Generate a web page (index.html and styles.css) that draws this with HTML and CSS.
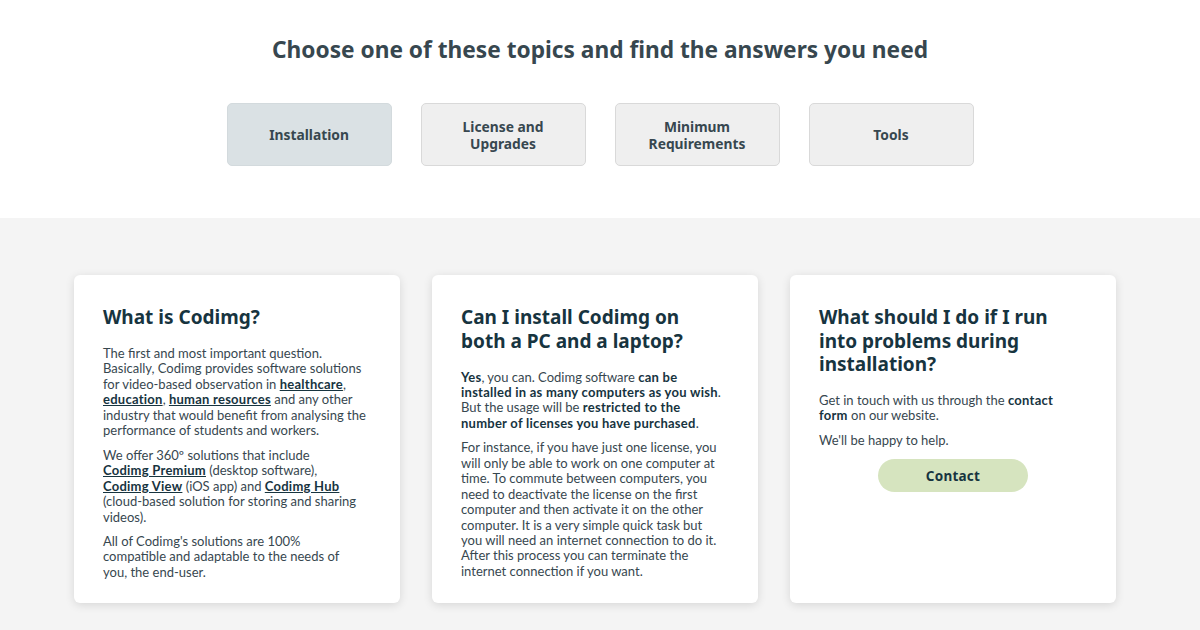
FILE: index.html
```html
<!DOCTYPE html>
<html lang="en">
<head>
    <meta charset="UTF-8">
    <meta name="viewport" content="width=device-width, initial-scale=1.0">
    <title>FAQ - Codimg</title>
    <link rel="stylesheet" href="styles.css">
</head>
<body>

    <section class="topics">
        <h2>Choose one of these topics and find the answers you need</h2>
        <div class="topic-list">
            <a href="#" class="topic active">Installation</a>
            <a href="#" class="topic">License and<br>Upgrades</a>
            <a href="#" class="topic">Minimum<br>Requirements</a>
            <a href="#" class="topic">Tools</a>
        </div>
    </section>

    <section class="answers">
        <div class="card">
            <h3>What is Codimg?</h3>
            <p>The first and most important question. Basically, Codimg provides software solutions for video-based observation in <a href="#">healthcare</a>, <a href="#">education</a>, <a href="#">human resources</a> and any other industry that would benefit from analysing the performance of students and workers.</p>
            <p>We offer 360º solutions that include <a href="#">Codimg&nbsp;Premium</a> (desktop software), <a href="#">Codimg&nbsp;View</a> (iOS app) and <a href="#">Codimg&nbsp;Hub</a> (cloud-based solution for storing and sharing videos).</p>
            <p>All of Codimg's solutions are 100% compatible and adaptable to the needs of you, the end-user.</p>
        </div>
        <div class="card">
            <h3>Can I install Codimg on both a PC and a laptop?</h3>
            <p><strong>Yes</strong>, you can. Codimg software <strong>can be installed in as many computers as you wish</strong>. But the usage will be <strong>restricted to the number of licenses you have purchased</strong>.</p>
            <p>For instance, if you have just one license, you will only be able to work on one computer at time. To commute between computers, you need to deactivate the license on the first computer and then activate it on the other computer. It is a very simple quick task but you will need an internet connection to do it. After this process you can terminate the internet connection if you want.</p>
        </div>
        <div class="card">
            <h3>What should I do if I run into problems during installation?</h3>
            <p>Get in touch with us through the <strong>contact form</strong> on our website.</p>
            <p>We'll be happy to help.</p>
            <a href="#" class="btn">Contact</a>
        </div>
    </section>

</body>
</html>
```

FILE: styles.css
```css
body {
    font-family: 'Noto Sans', 'Open Sans', sans-serif;
    margin: 0;
    color: #37474f;
    background-color: #fff;
}
.topics {
    height: 218px;
    box-sizing: border-box;
    padding-top: 34px;
    text-align: center;
}
.topics h2 {
    margin: 0;
    font-size: 22.7px;
    line-height: 32px;
    font-weight: 700;
    color: #37474f;
}
.topic-list {
    display: flex;
    justify-content: center;
    gap: 29px;
    margin-top: 37px;
}
.topic {
    display: flex;
    align-items: center;
    justify-content: center;
    width: 165px;
    height: 63px;
    box-sizing: border-box;
    padding-top: 2px;
    background-color: #efefef;
    border: 1px solid #d9d9d9;
    border-radius: 5px;
    color: #37474f;
    font-size: 13.8px;
    font-weight: 700;
    line-height: 16.5px;
    text-decoration: none;
}
.topic.active {
    background-color: #dae1e4;
    border-color: #d3dadd;
}
.answers {
    background-color: #f4f4f4;
    height: 412px;
    box-sizing: border-box;
    padding: 57px 0 0 74px;
    display: flex;
    align-items: flex-start;
    gap: 32px;
}
.card {
    width: 326px;
    height: 328px;
    box-sizing: border-box;
    padding: 31px 34px 0 29px;
    background-color: #fff;
    border-radius: 6px;
    box-shadow: 0 2px 10px rgba(0, 0, 0, 0.12);
    display: flex;
    flex-direction: column;
}
.card h3 {
    margin: 0 0 16.5px;
    font-size: 19px;
    line-height: 23.5px;
    font-weight: 700;
    color: #17343f;
}
.card p {
    margin: 0 0 9px;
    font-family: 'Lato', sans-serif;
    font-size: 13px;
    line-height: 15.45px;
    color: #37474f;
}
.card a, .card strong {
    color: #17343f;
    font-weight: 700;
    letter-spacing: 0.25px;
}
.btn {
    align-self: center;
    display: flex;
    align-items: center;
    justify-content: center;
    width: 150px;
    height: 33px;
    margin-top: 2px;
    margin-right: -5px;
    border-radius: 17px;
    background-color: #d6e4bf;
    font-size: 13.5px;
    text-decoration: none;
}
```
